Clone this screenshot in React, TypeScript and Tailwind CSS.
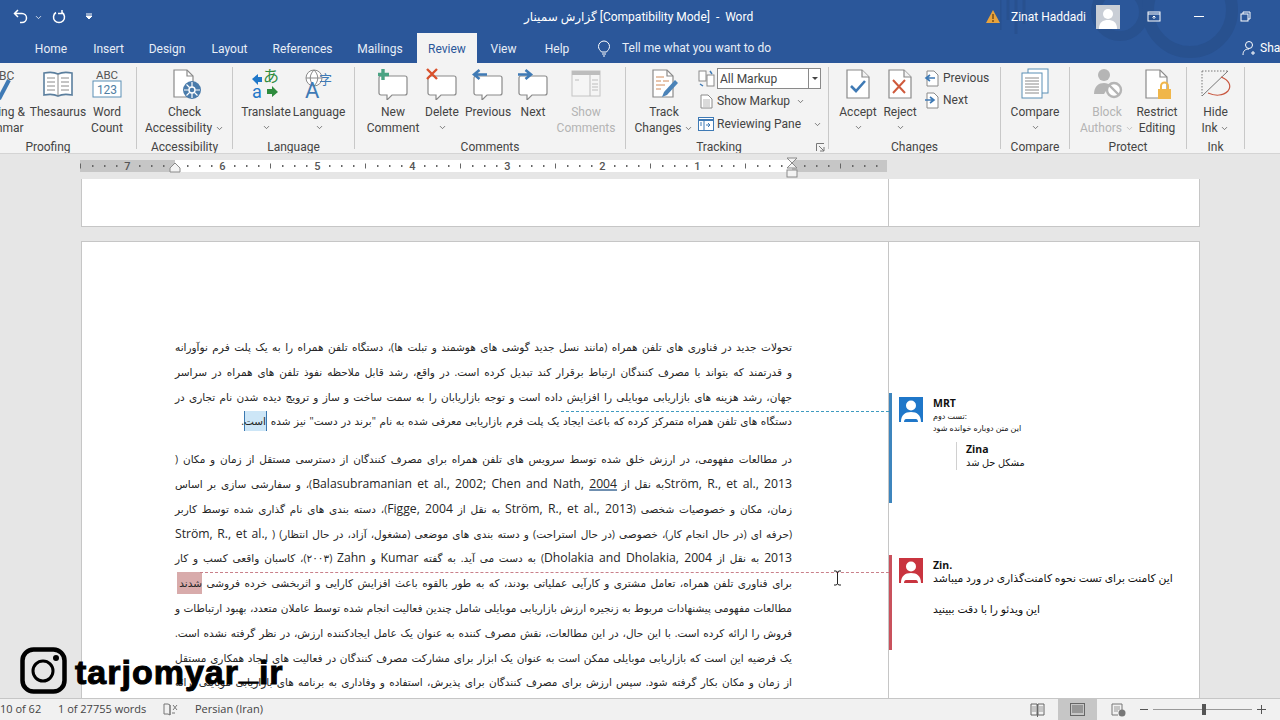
import React from "react";
import { ChevronDown } from "lucide-react";

const Caret = ({ c = "#555" }: { c?: string }) => (
  <ChevronDown size={9} strokeWidth={2} color={c} className="inline-block" />
);

const Bubble = () => (
  <path d="M4 8h24a2 2 0 0 1 2 2v15a2 2 0 0 1-2 2H15l-5 5v-5H4a2 2 0 0 1-2-2V10a2 2 0 0 1 2-2z" fill="#fff" stroke="#8a8a8a" strokeWidth="1.2" />
);
const Ico = ({ children, w = 32, h = 32 }: { children: React.ReactNode; w?: number; h?: number }) => (
  <svg width={w} height={h} viewBox="0 0 32 32" fill="none">{children}</svg>
);
const Page = () => (
  <>
    <path d="M5 2h15l7 7v21H5z" fill="#fff" stroke="#8a8a8a" strokeWidth="1.2" />
    <path d="M20 2v7h7" fill="#f3f3f3" stroke="#8a8a8a" strokeWidth="1.2" />
  </>
);

const SmallDoc = ({ dir }: { dir: "l" | "r" }) => (
  <svg width="15" height="17" viewBox="0 0 15 17" fill="none">
    <path d="M3 1h7l4 4v11H3z" fill="#fff" stroke="#8a8a8a" />
    <path d={dir === "l" ? "M11 8H3M6 5L2 8l4 3" : "M1 8h8M6 5l4 3-4 3"} stroke="#3f7ab5" strokeWidth="1.6" />
  </svg>
);

const icons: Record<string, React.ReactNode> = {
  spell: (
    <Ico>
      <text x="16" y="12" fontSize="12" fill="#555" fontFamily="Roboto">BC</text>
      <path d="M16 31L26 12" stroke="#3f7ab5" strokeWidth="4" />
    </Ico>
  ),
  thesaurus: (
    <Ico>
      <path d="M2 5c5-1 10-1 14 1 4-2 9-2 14-1v22c-5-1-10-1-14 1-4-2-9-2-14-1z" fill="#fff" stroke="#5b7f9e" strokeWidth="1.6" />
      <path d="M16 6v22M5 10h8M5 14h8M5 18h8M5 22h8M19 10h8M19 14h8M19 18h8M19 22h8" stroke="#8a8a8a" />
    </Ico>
  ),
  count: (
    <Ico>
      <text x="16" y="11" textAnchor="middle" fontSize="11.5" fill="#555" fontFamily="Roboto">ABC</text>
      <rect x="2" y="13" width="28" height="16" fill="#fff" stroke="#5b8fb5" />
      <text x="16" y="26" textAnchor="middle" fontSize="12" fill="#4f7ea3" fontFamily="Roboto">123</text>
    </Ico>
  ),
  access: (
    <Ico>
      <path d="M5 2h13l6 6v21H5z" fill="#fff" stroke="#8a8a8a" strokeWidth="1.2" />
      <path d="M18 2v6h6" stroke="#8a8a8a" strokeWidth="1.2" />
      <circle cx="23" cy="22" r="9" fill="#4b7cab" />
      <circle cx="23" cy="22" r="3" fill="none" stroke="#fff" strokeWidth="1.4" />
      <path d="M23 14v5M23 25v5M15 22h5M26 22h5M17.500 16.500l3 3M25.500 24.500l3 3M17.500 27.500l3-3" stroke="#fff" strokeWidth="1.2" />
    </Ico>
  ),
  translate: (
    <Ico>
      <path d="M2 11l6-5v3h4v5H8v3z" fill="#1f77c9" />
      <text x="13" y="14" fontSize="16" fill="#2e8b3d" fontFamily="Noto Sans CJK JP">あ</text>
      <text x="2" y="30" fontSize="18" fill="#1f77c9" fontFamily="Roboto">a</text>
      <path d="M28 24l-6 5v-3h-5v-5h5v-3z" fill="#2e8b3d" />
    </Ico>
  ),
  language: (
    <Ico>
      <circle cx="11" cy="10" r="8" fill="#fff" stroke="#8a8a8a" />
      <path d="M3 10h16M11 2c-5 5-5 11 0 16M11 2c5 5 5 11 0 16" stroke="#8a8a8a" />
      <text x="16" y="16" fontSize="13" fill="#3f7ab5" fontFamily="Noto Sans CJK SC">字</text>
      <text x="2" y="30" fontSize="22" fill="#3f7ab5" fontFamily="Roboto">A</text>
    </Ico>
  ),
  newc: (
    <Ico>
      <Bubble />
      <path d="M6 1v11M1 6.500h11" stroke="#4aa383" strokeWidth="3.400" />
    </Ico>
  ),
  deletec: (
    <Ico>
      <Bubble />
      <path d="M1 1l10 10M11 1L1 11" stroke="#d9512c" strokeWidth="2.400" />
    </Ico>
  ),
  prevc: (
    <Ico>
      <Bubble />
      <path d="M15 6.500H3M7.500 2L2 6.500 7.500 11" stroke="#3f7ab5" strokeWidth="2.600" />
    </Ico>
  ),
  nextc: (
    <Ico>
      <Bubble />
      <path d="M1 6.500h12M8.500 2L14 6.500 8.500 11" stroke="#3f7ab5" strokeWidth="2.600" />
    </Ico>
  ),
  showc: (
    <Ico>
      <rect x="2" y="3" width="28" height="25" fill="#f5f5f5" stroke="#c4c4c4" />
      <rect x="2" y="3" width="28" height="4" fill="#bdbdbd" />
      <path d="M20 7v21M22 12h6M22 16h6M22 19h6M22 22h6M5 12h4" stroke="#bdbdbd" />
    </Ico>
  ),
  track: (
    <Ico>
      <path d="M5 2h14l6 6v21H5z" fill="#fff" stroke="#8a8a8a" strokeWidth="1.2" />
      <path d="M19 2v6h6" stroke="#8a8a8a" strokeWidth="1.2" />
      <path d="M8 9h8M8 13h5M15 13h6M8 17h9M8 21h5" stroke="#d08a5a" />
      <path d="M14 29l2-5L27 12l3 3-11 12z" fill="#4b83b8" />
    </Ico>
  ),
  accept: (
    <Ico>
      <Page />
      <path d="M9 18l5 5 9-10" stroke="#3f7ab5" strokeWidth="2.600" />
    </Ico>
  ),
  reject: (
    <Ico>
      <Page />
      <path d="M9 12l12 13M21 12L9 25" stroke="#cf5a3c" strokeWidth="2" />
    </Ico>
  ),
  compare: (
    <Ico>
      <rect x="9" y="1" width="20" height="24" fill="#fff" stroke="#5b8fb5" />
      <rect x="3" y="5" width="20" height="25" fill="#fff" stroke="#5b8fb5" />
      <path d="M6 10h14M6 13h14M6 16h14M6 19h14M6 22h14M6 25h14" stroke="#8a8a8a" />
    </Ico>
  ),
  block: (
    <Ico>
      <circle cx="13" cy="7" r="6" fill="#b5b5b5" />
      <path d="M3 26c0-8 5-11 10-11 3 0 5 1 6 2l-6 9z" fill="#b5b5b5" />
      <circle cx="23" cy="22" r="7" fill="#fff" stroke="#b5b5b5" strokeWidth="2.400" />
      <path d="M18 17l10 10" stroke="#b5b5b5" strokeWidth="2.400" />
    </Ico>
  ),
  restrict: (
    <Ico>
      <path d="M5 2h14l7 7v21H5z" fill="#fff" stroke="#8a8a8a" strokeWidth="1.2" />
      <path d="M19 2v7h7" stroke="#8a8a8a" strokeWidth="1.2" />
      <rect x="17" y="21" width="13" height="10" fill="#f0b64a" />
      <path d="M20 21v-3a3.500 3.500 0 0 1 7 0v3" stroke="#f0b64a" strokeWidth="2" />
    </Ico>
  ),
  ink: (
    <Ico>
      <path d="M2 3h26M2 3v25" stroke="#777" strokeWidth="1" strokeDasharray="1.500 1.500" />
      <path d="M2 28L28 3" stroke="#777" />
      <path d="M21 9c8 3 11 9 7 14-5 5-13 5-20 2" stroke="#c8553d" strokeWidth="1.200" />
    </Ico>
  ),
};

const Btn = ({ w, icon, l1, l2, caret, off, ml }: { w: string; icon: string; l1: string; l2?: string; caret?: "line" | "inline"; off?: boolean; ml?: string }) => (
  <div className={`${w} ${ml ?? ""} shrink-0 flex flex-col items-center ${off ? "text-[#b4b4b4]" : "text-[#444]"}`}>
    <div className="h-[37px] pt-[1px] flex items-start justify-center">{icons[icon]}</div>
    <div className="leading-[16px] whitespace-nowrap">{l1}</div>
    {l2 && (
      <div className="leading-[16px] whitespace-nowrap">
        {l2}
        {caret === "inline" && <span className="ml-[3px]"><Caret c={off ? "#b4b4b4" : "#555"} /></span>}
      </div>
    )}
    {caret === "line" && <div className="leading-[14px]"><Caret /></div>}
  </div>
);

const Group = ({ w, label, children, labelCls }: { w: string; label: string; children: React.ReactNode; labelCls?: string }) => (
  <div className={`${w} shrink-0 my-[4px] border-r border-[#c8c8c8] flex flex-col relative`}>
    <div className="flex flex-1 items-start">{children}</div>
    <div className={`h-[13px] leading-[22px] text-center text-[12px] text-[#444] ${labelCls ?? ""}`}>{label}</div>
  </div>
);

const Tab = ({ w, children }: { w: string; children: React.ReactNode }) => (
  <div className={`${w} text-center shrink-0 whitespace-nowrap`}>{children}</div>
);

const Line = ({ children, last }: { children: React.ReactNode; last?: boolean }) => (
  <div className={`h-[24.800px] leading-[24.800px] whitespace-nowrap ${last ? "[word-spacing:0.9px]" : "text-justify [text-align-last:justify]"}`}>{children}</div>
);
const L = ({ children }: { children: React.ReactNode }) => <span dir="ltr" className="text-[12.200px]">{children}</span>;

const Avatar = ({ bg }: { bg: string }) => (
  <svg width="24" height="25" viewBox="0 0 24 25" className="shrink-0">
    <rect width="24" height="25" fill={bg} />
    <circle cx="12" cy="8.500" r="5" fill="#fff" />
    <path d="M2 25c0-7 4-10 10-10s10 3 10 10h-3c0-2-1-3-2-3H7c-1 0-2 1-2 3z" fill="#fff" />
  </svg>
);

const Ruler = () => {
  const nums = [7, 6, 5, 4, 3, 2, 1];
  const marks: number[] = [];
  for (let i = 0; i <= 68; i++) marks.push(i);
  return (
    <svg width="830" height="24" viewBox="0 0 830 24" className="ml-[80px]">
      <rect x="0" y="6" width="807" height="12" fill="#fff" />
      <rect x="0" y="6" width="95" height="12" fill="#c6c6c6" />
      <rect x="712" y="6" width="95" height="12" fill="#c6c6c6" />
      {marks.map((i) => {
        const k = i % 8;
        if (k === 4) return null;
        const x = Math.round(i * 11.875);
        return k === 0 ? (
          <rect key={i} x={x} y="9.500" width="1" height="5" fill="#666" />
        ) : (
          <rect key={i} x={x} y="11" width="1.500" height="2" fill="#666" />
        );
      })}
      {nums.map((n, i) => (
        <text key={n} x={47.500 + i * 95} y="16" textAnchor="middle" fontSize="11" fontWeight="500" fill="#555" fontFamily="Roboto">{n}</text>
      ))}
      <path d="M95 9l-5 5v4h10v-4z" fill="#f3f3f3" stroke="#8a8a8a" />
      <path d="M707 4h10l-5 5 5 5h-10l5-5z" fill="#f3f3f3" stroke="#8a8a8a" />
      <rect x="707" y="16" width="10" height="7" fill="#f3f3f3" stroke="#8a8a8a" />
    </svg>
  );
};

export default function App() {
  return (
    <div className="relative w-[1280px] h-[720px] overflow-hidden flex flex-col bg-[#e6e6e6] text-[12px] [font-family:'Roboto','DejaVu_Sans',sans-serif]">
      {/* blue header */}
      <div className="relative bg-[#2b579a] h-[63px] shrink-0 text-white overflow-hidden">
        <svg width="280" height="63" viewBox="0 0 280 63" className="absolute right-0 top-0">
          <circle cx="120" cy="12" r="24" fill="none" stroke="#28518f" strokeWidth="10" />
          <circle cx="190" cy="10" r="42" fill="none" stroke="#28518f" strokeWidth="12" />
          <path d="M0 0v30M8 0v20M16 0v34M24 0v24" stroke="#28518f" strokeWidth="3" />
        </svg>
        <div className="relative flex items-center h-[33px]">
          <div className="w-[524px] shrink-0 flex items-center pl-[13px]">
            <svg width="15" height="15" viewBox="0 0 15 15" fill="none"><path d="M5 1L1.500 4.500 5 8M2 4.500h7a4.500 4.500 0 0 1 0 9H7" stroke="#fff" strokeWidth="1.500" /></svg>
            <span className="ml-[6px]"><Caret c="#fff" /></span>
            <svg width="15" height="15" viewBox="0 0 15 15" fill="none" className="ml-[9px]"><path d="M4 3.500a5.500 5.500 0 1 0 6 0M10 1v3.500h-4" stroke="#fff" strokeWidth="1.500" /></svg>
            <svg width="8" height="8" viewBox="0 0 8 8" className="ml-[18px]"><path d="M1 1h6M1 3l3 3 3-3z" stroke="#fff" fill="#fff" /></svg>
          </div>
          <div className="whitespace-pre text-[12px]">گزارش سمینار [Compatibility Mode]  -  Word</div>
          <div className="flex-1" />
          <svg width="16" height="15" viewBox="0 0 16 15" className="mr-[10px]"><path d="M8 1l7 13H1z" fill="#e8a33d" /><path d="M8 5v5M8 11v2" stroke="#5b3a10" strokeWidth="1.200" /></svg>
          <div className="whitespace-nowrap w-[85px]">Zinat Haddadi</div>
          <svg width="24" height="24" viewBox="0 0 24 24"><rect width="24" height="24" fill="#c9ced6" /><circle cx="12" cy="9" r="5" fill="#fff" /><path d="M3 24c0-7 4-9 9-9s9 2 9 9z" fill="#fff" /></svg>
          <svg width="14" height="12" viewBox="0 0 14 12" fill="none" className="ml-[27px]"><rect x="1" y="1" width="12" height="9" stroke="#fff" /><path d="M1 3h12M7 8V5M5.500 6.500L7 5l1.500 1.500" stroke="#fff" /></svg>
          <div className="ml-[33px] w-[10px] h-[1px] bg-white" />
          <svg width="11" height="11" viewBox="0 0 11 11" fill="none" className="ml-[36px] mr-[29px]"><rect x="1" y="3" width="7" height="7" stroke="#fff" /><path d="M3 3V1h7v7H8" stroke="#fff" /></svg>
        </div>
        <div className="relative flex items-end h-[30px]">
          <div className="flex items-center h-[30px] pt-[1px] pl-[21px] text-[#e8eef7] text-[12px]">
            <Tab w="w-[60px]">Home</Tab>
            <Tab w="w-[55px]">Insert</Tab>
            <Tab w="w-[62px]">Design</Tab>
            <Tab w="w-[63px]">Layout</Tab>
            <Tab w="w-[83px]">References</Tab>
            <Tab w="w-[72px]">Mailings</Tab>
          </div>
          <div className="ml-[1px] w-[60px] h-[30px] bg-[#f3f3f3] text-[#2b579a] text-center leading-[32px]">Review</div>
          <div className="flex items-center h-[30px] pt-[1px] text-[#e8eef7]">
            <Tab w="w-[53px]">View</Tab>
            <Tab w="w-[54px]">Help</Tab>
          </div>
          <div className="flex items-center h-[30px] ml-[13px] text-[#e8eef7]">
            <svg width="14" height="17" viewBox="0 0 14 17" fill="none"><path d="M4.500 12C3 10 1.500 9 1.500 6.500a5.500 5.500 0 0 1 11 0C12.500 9 11 10 9.500 12zM5 14h4M6 16h2" stroke="#fff" /></svg>
            <span className="ml-[11px] whitespace-nowrap">Tell me what you want to do</span>
          </div>
          <div className="flex-1" />
          <div className="flex items-center h-[30px] text-white w-[38px] overflow-hidden">
            <svg width="15" height="16" viewBox="0 0 15 16" fill="none" className="shrink-0"><circle cx="7" cy="5" r="3.500" stroke="#fff" /><path d="M1 15c0-4 2-6 6-6M11 11v4M9 13h4" stroke="#fff" /></svg>
            <span className="ml-[3px]">Share</span>
          </div>
        </div>
      </div>

      {/* ribbon */}
      <div className="flex h-[91px] shrink-0 bg-[#f3f3f3] border-b border-[#d4d4d4] overflow-hidden">
        <Group w="w-[137px]" label="Proofing" labelCls="pr-[40px]">
          <Btn w="w-[63px]" ml="ml-[-33px]" icon="spell" l1="Spelling &" l2="Grammar" />
          <Btn w="w-[56px]" icon="thesaurus" l1="Thesaurus" />
          <Btn w="w-[42px]" icon="count" l1="Word" l2="Count" />
        </Group>
        <Group w="w-[96px]" label="Accessibility">
          <Btn w="w-[95px]" icon="access" l1="Check" l2="Accessibility" caret="inline" />
        </Group>
        <Group w="w-[122px]" label="Language">
          <div className="w-[6px] shrink-0" />
          <Btn w="w-[54px]" icon="translate" l1="Translate" caret="line" />
          <Btn w="w-[52px]" icon="language" l1="Language" caret="line" />
        </Group>
        <Group w="w-[271px]" label="Comments">
          <div className="w-[10px] shrink-0" />
          <Btn w="w-[56px]" icon="newc" l1="New" l2="Comment" />
          <Btn w="w-[42px]" icon="deletec" l1="Delete" caret="line" />
          <Btn w="w-[50px]" icon="prevc" l1="Previous" />
          <Btn w="w-[40px]" icon="nextc" l1="Next" />
          <Btn w="w-[66px]" icon="showc" l1="Show" l2="Comments" off />
        </Group>
        <Group w="w-[203px]" label="Tracking" labelCls="pr-[16px]">
          <div className="w-[8px] shrink-0" />
          <Btn w="w-[60px]" icon="track" l1="Track" l2="Changes" caret="inline" />
          <div className="ml-[4px] flex flex-col text-[#444]">
            <div className="h-[23px] flex items-center">
              <svg width="17" height="17" viewBox="0 0 17 17" fill="none"><rect x="1" y="1" width="7" height="10" fill="#fff" stroke="#8a8a8a" /><rect x="9" y="5" width="7" height="11" fill="#fff" stroke="#8a8a8a" /><path d="M2 14l3 2M12 1l2 3" stroke="#3f7ab5" strokeWidth="1.500" /></svg>
              <div className="ml-[2px] w-[104px] h-[21px] bg-white border border-[#8a8a8a] flex items-center pl-[2px]">
                <span className="flex-1">All Markup</span>
                <span className="w-[12px] h-full border-l border-[#8a8a8a] flex items-center justify-center">
                  <svg width="6" height="3" viewBox="0 0 6 3"><path d="M0 0h6L3 3z" fill="#444" /></svg>
                </span>
              </div>
            </div>
            <div className="h-[22px] flex items-center pl-[2px]">
              <svg width="13" height="15" viewBox="0 0 13 15" fill="none"><path d="M1 1h7l4 4v9H1z" fill="#fff" stroke="#8a8a8a" /><path d="M3 6h7M3 8h7M3 10h7M3 12h7" stroke="#b5b5b5" /></svg>
              <span className="ml-[4px] whitespace-nowrap">Show Markup</span>
              <span className="ml-[6px]"><Caret /></span>
            </div>
            <div className="h-[23px] flex items-center">
              <svg width="16" height="14" viewBox="0 0 16 14" fill="none"><rect x="0.500" y="0.500" width="15" height="13" fill="#fff" stroke="#3f7ab5" /><path d="M0 3h16" stroke="#3f7ab5" strokeWidth="2" /><path d="M6 3v10M2 6h2M2 8h2M8 8h4M10 6l2 2-2 2" stroke="#3f7ab5" /></svg>
              <span className="ml-[3px] whitespace-nowrap">Reviewing Pane</span>
              <span className="ml-[12px]"><Caret /></span>
            </div>
          </div>
          <svg width="9" height="9" viewBox="0 0 9 9" fill="none" className="absolute right-[3px] bottom-[-3px]"><path d="M0.500 8V0.500H8M3 3l5 5M4 8h4V4" stroke="#777" /></svg>
        </Group>
        <Group w="w-[172px]" label="Changes">
          <div className="w-[8px] shrink-0" />
          <Btn w="w-[42px]" icon="accept" l1="Accept" caret="line" />
          <Btn w="w-[42px]" icon="reject" l1="Reject" caret="line" />
          <div className="ml-[3px] flex flex-col text-[#444]">
            <div className="h-[22px] flex items-center"><SmallDoc dir="l" /><span className="ml-[4px]">Previous</span></div>
            <div className="h-[22px] flex items-center"><SmallDoc dir="r" /><span className="ml-[4px]">Next</span></div>
          </div>
        </Group>
        <Group w="w-[69px]" label="Compare">
          <Btn w="w-[68px]" icon="compare" l1="Compare" caret="line" />
        </Group>
        <Group w="w-[117px]" label="Protect">
          <div className="w-[7px] shrink-0" />
          <Btn w="w-[60px]" icon="block" l1="Block" l2="Authors" caret="inline" off />
          <Btn w="w-[40px]" icon="restrict" l1="Restrict" l2="Editing" />
        </Group>
        <Group w="w-[58px]" label="Ink">
          <Btn w="w-[57px]" icon="ink" l1="Hide" l2="Ink" caret="inline" />
        </Group>
      </div>

      {/* ruler */}
      <div className="h-[24px] shrink-0 bg-[#e6e6e6]"><Ruler /></div>

      {/* document */}
      <div className="flex-1 min-h-0 overflow-hidden pl-[81px] [font-family:'Open_Sans','DejaVu_Sans',sans-serif]">
        <div className="w-[1119px] h-[48px] bg-white border-x border-b border-[#c6c6c6] mt-[1px] flex">
          <div className="w-[807px] border-r border-[#c6c6c6]" />
        </div>
        <div className="relative w-[1119px] h-[600px] mt-[14px] bg-white border border-[#c6c6c6] flex">
          <div className="absolute left-[479px] w-[328px] top-[169px] border-t border-dashed border-[#3f9bc0]" />
          <div className="absolute left-[118px] w-[689px] top-[330px] border-t border-dashed border-[#c9808a]" />
          <div dir="rtl" className="w-[807px] shrink-0 border-r border-[#c6c6c6] pt-[93px] pl-[93px] pr-[96px] text-[10.500px] text-[#262626]">
            <Line>تحولات جدید در فناوری های تلفن همراه (مانند نسل جدید گوشی های هوشمند و تبلت ها)، دستگاه تلفن همراه را به یک پلت فرم نوآورانه</Line>
            <Line>و قدرتمند که بتواند با مصرف کنندگان ارتباط برقرار کند تبدیل کرده است. در واقع، رشد قابل ملاحظه نفوذ تلفن های همراه  در سراسر</Line>
            <Line>جهان، رشد هزینه های بازاریابی موبایلی را افزایش داده است و توجه بازاریابان را به سمت ساخت و ساز و ترویج دیده شدن نام تجاری در</Line>
            <Line last>دستگاه های تلفن همراه متمرکز کرده که باعث ایجاد یک پلت فرم بازاریابی معرفی شده به نام "برند در دست" نیز شده <span className="inline-block h-[20px] leading-[20px] w-[23px] text-center bg-[#cde6f7] border-x border-[#3a78b0]">است.</span></Line>
            <div className="h-[13px]" />
            <Line>در مطالعات مفهومی، در ارزش خلق شده توسط سرویس های تلفن همراه برای مصرف کنندگان از دسترسی مستقل از زمان و مکان (</Line>
            <Line><L>Ström, R., et al., 2013</L>به نقل از <L>Balasubramanian et al., 2002; Chen and Nath, <span className="underline decoration-[#6f8fb0] decoration-2">2004</span></L>)، و سفارشی سازی بر اساس</Line>
            <Line>زمان، مکان و خصوصیات شخصی (<L>Ström, R., et al., 2013</L> به نقل از <L>Figge, 2004</L>)، دسته بندی های نام گذاری شده توسط کاربر</Line>
            <Line>(حرفه ای (در حال انجام کار)، خصوصی (در حال استراحت) و دسته بندی های موضعی (مشغول، آزاد، در حال انتظار) ( <L>Ström, R., et al.,</L></Line>
            <Line><L>2013</L> به نقل از <L>Dholakia and Dholakia, 2004</L>) به دست می آید. به گفته <L>Kumar</L> و <L>Zahn</L> (۲۰۰۳)، کاسبان واقعی کسب و کار</Line>
            <Line>برای فناوری تلفن همراه، تعامل مشتری و کارآیی عملیاتی بودند، که به طور بالقوه باعث افزایش کارایی و اثربخشی خرده فروشی <span className="inline-block h-[22px] leading-[22px] w-[25px] ml-[2px] text-center bg-[#d8abab]">شدند</span></Line>
            <Line>مطالعات مفهومی پیشنهادات مربوط به زنجیره ارزش بازاریابی موبایلی شامل چندین فعالیت انجام شده توسط عاملان متعدد، بهبود ارتباطات و</Line>
            <Line>فروش را ارائه کرده است. با این حال، در این مطالعات، نقش مصرف کننده به عنوان یک عامل ایجادکننده ارزش، در نظر گرفته نشده است.</Line>
            <Line>یک فرضیه این است که بازاریابی موبایلی ممکن است به عنوان یک ابزار برای مشارکت مصرف کنندگان در فعالیت های ایجاد همکاری مستقل</Line>
            <Line>از زمان و مکان بکار گرفته شود. سپس ارزش برای مصرف کنندگان برای پذیرش، استفاده و وفاداری به برنامه های بازاریابی موبایلی ارائه</Line>
          </div>
          {/* comments margin */}
          <div className="flex-1 pt-[151px] text-[#111]">
            <div className="h-[110px] border-l-[3px] border-[#3d85bd] pl-[7px] pt-[4px] flex gap-[10px]">
              <Avatar bg="#1f77c9" />
              <div className="flex-1">
                <div className="font-bold text-[10.500px] leading-[13px]">MRT</div>
                <div className="text-[8px] leading-[12px]">تست دوم:</div>
                <div className="text-[8px] leading-[12px]">این متن دوباره خوانده شود</div>
                <div className="mt-[8px] ml-[23px] border-l-[1px] border-[#d0d0d0] pl-[9px] h-[28px]">
                  <div className="font-bold text-[10.500px] leading-[14px]">Zina</div>
                  <div className="text-[9.800px] leading-[14px]">مشکل حل شد</div>
                </div>
              </div>
            </div>
            <div className="h-[95px] mt-[52px] border-l-[3px] border-[#c9515c] pl-[7px] pt-[3px] flex gap-[10px]">
              <Avatar bg="#c9343f" />
              <div className="flex-1">
                <div className="font-bold text-[10.500px] leading-[14px]">Zin.</div>
                <div className="text-[10.750px] leading-[13px]">این کامنت برای تست نحوه کامنت‌گذاری در ورد میباشد</div>
                <div className="text-[10.750px] leading-[13px] mt-[18px]">این ویدئو را با دقت ببینید</div>
              </div>
            </div>
          </div>
        </div>
      </div>

      {/* status bar */}
      <div className="h-[22px] shrink-0 bg-[#f1f1f1] border-t border-[#c6c6c6] flex items-center text-[11px] text-[#444] [font-family:'Open_Sans',sans-serif]">
        <span className="w-[58px] whitespace-nowrap">10 of 62</span>
        <span className="w-[105px] whitespace-nowrap">1 of 27755 words</span>
        <svg width="15" height="13" viewBox="0 0 15 13" fill="none"><path d="M1 1h4l2 1v10l-2-1H1zM7 2v10M10 2l4 5M14 2l-4 5M9 10h3" stroke="#777" /></svg>
        <span className="ml-[17px]">Persian (Iran)</span>
        <div className="flex-1" />
        <svg width="15" height="14" viewBox="0 0 15 14" fill="none" className="mr-[13px]"><path d="M1 1h6v11H1zM8 1h6v11H8zM7.500 1v13" stroke="#666" /><path d="M2 4h4M2 6h4M2 8h4M9 4h4M9 6h4M9 8h4" stroke="#999" /></svg>
        <div className="w-[39px] h-[21px] bg-[#c6c6c6] flex items-center justify-center">
          <svg width="15" height="13" viewBox="0 0 15 13" fill="none"><rect x="0.500" y="0.500" width="14" height="12" stroke="#666" /><path d="M2 3h11M2 5h11M2 7h11M2 9h11" stroke="#666" /></svg>
        </div>
        <svg width="15" height="14" viewBox="0 0 15 14" fill="none" className="ml-[14px]"><path d="M1 1h10v8M1 1v11h6" stroke="#777" /><path d="M3 4h6M3 6h6M3 8h4" stroke="#999" /><circle cx="11" cy="10" r="3.500" fill="#777" /></svg>
        <div className="ml-[14px] w-[8px] h-[1px] bg-[#555]" />
        <div className="relative ml-[5px] w-[99px] h-[1px] bg-[#999]">
          <div className="absolute left-[49px] top-[-5px] w-[4px] h-[11px] bg-[#555]" />
        </div>
        <svg width="9" height="9" viewBox="0 0 9 9" className="ml-[5px]"><path d="M4.500 0v9M0 4.500h9" stroke="#555" /></svg>
        <div className="w-[14px]" />
      </div>

      {/* watermark */}
      <div className="absolute left-[20px] top-[647px] flex items-center text-black">
        <svg width="47" height="47" viewBox="0 0 47 47" fill="none">
          <rect x="2.500" y="2.500" width="42" height="42" rx="11" stroke="#000" strokeWidth="4.500" />
          <circle cx="23" cy="24" r="10" stroke="#000" strokeWidth="3" />
          <circle cx="36" cy="11" r="3" fill="#000" />
        </svg>
        <span className="ml-[8px] mt-[2px] text-[34px] leading-[40px] font-bold whitespace-nowrap tracking-[1px] [-webkit-text-stroke:1px_#000] [font-family:'Liberation_Sans',sans-serif]">
          tarjomyar<span className="inline-block -translate-y-[5px]">_</span>ir
        </span>
      </div>

      {/* i-beam cursor */}
      <svg width="9" height="16" viewBox="0 0 9 16" fill="none" className="absolute left-[833px] top-[570px]">
        <path d="M1 1h2l1.500 1L6 1h2M4.500 2v12M1 15h2l1.500-1L6 15h2" stroke="#222" />
      </svg>
    </div>
  );
}
